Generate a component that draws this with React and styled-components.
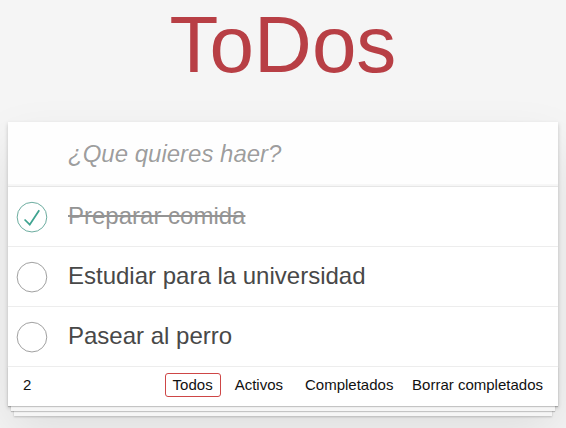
import React from "react";
import styled, { createGlobalStyle } from "styled-components";

const Global = createGlobalStyle`
  html, body { margin: 0; padding: 0; }
  body {
    background: #f5f5f5;
    font-family: "Liberation Sans", Arial, Helvetica, sans-serif;
    color: #111111;
    -webkit-font-smoothing: antialiased;
  }
  * { box-sizing: border-box; }
`;

const Page = styled.div`
  max-width: 550px;
  margin: 0 auto;
  padding-top: 5px;
  padding-bottom: 40px;
`;

const Title = styled.h1`
  margin: 0;
  font-size: 80px;
  line-height: 80px;
  font-weight: 400;
  text-align: center;
  color: #b83f45;
`;

const Card = styled.section`
  margin-top: 37px;
  background: #fff;
  box-shadow: 0 2px 4px 0 rgba(0, 0, 0, 0.2), 0 25px 50px 0 rgba(0, 0, 0, 0.1);
`;

const NewTodo = styled.input`
  display: block;
  width: 100%;
  height: 65px;
  margin: 0;
  padding: 16px 16px 16px 60px;
  border: none;
  border-bottom: 1px solid #e6e6e6;
  font-family: inherit;
  font-size: 24px;
  line-height: 1.4em;
  color: #111;
  background: rgba(0, 0, 0, 0.003);
  box-shadow: inset 0 -2px 1px rgba(0, 0, 0, 0.03);
  outline: none;
  &::placeholder {
    font-style: italic;
    color: rgba(0, 0, 0, 0.4);
  }
`;

const List = styled.ul`
  margin: 0;
  padding: 0;
  list-style: none;
`;

const Item = styled.li`
  display: flex;
  align-items: center;
  height: 60px;
  border-bottom: 1px solid #ededed;
`;

const ToggleBox = styled.span`
  flex: 0 0 40px;
  display: flex;
  align-items: center;
  justify-content: center;
  margin-left: 1px;
`;

const Label = styled.label`
  flex: 1;
  padding: 0 15px 0 19px;
  font-size: 24px;
  line-height: 1.2;
  color: ${(p) => (p.$done ? "#949494" : "#484848")};
  text-decoration: ${(p) => (p.$done ? "line-through" : "none")};
`;

const Footer = styled.footer`
  display: grid;
  grid-template-columns: 1fr auto 1fr;
  align-items: center;
  height: 39px;
  padding: 0 15px 3px;
  font-size: 15px;
  color: #111;
  box-shadow: 0 1px 1px rgba(0, 0, 0, 0.2), 0 8px 0 -3px #f6f6f6,
    0 9px 1px -3px rgba(0, 0, 0, 0.2), 0 16px 0 -6px #f6f6f6,
    0 17px 2px -6px rgba(0, 0, 0, 0.2);
`;

const Count = styled.span`
  justify-self: start;
  line-height: 20px;
`;

const Filters = styled.ul`
  display: flex;
  margin: 0;
  padding: 0;
  list-style: none;
`;

const FilterLink = styled.a`
  display: block;
  margin: 3px;
  padding: 3px 7px;
  line-height: 16px;
  color: inherit;
  text-decoration: none;
  border: 1px solid ${(p) => (p.$selected ? "#ce4646" : "transparent")};
  border-radius: 3px;
`;

const Clear = styled.span`
  justify-self: end;
  line-height: 20px;
`;

function Toggle({ done }) {
  return (
    <svg width="40" height="40" viewBox="-10 -18 100 135">
      <circle
        cx="50"
        cy="50"
        r="50"
        fill="none"
        stroke={done ? "#59A193" : "#949494"}
        strokeWidth="3"
      />
      {done && <path fill="#3EA390" d="M72 25L42 71 27 56l-4 4 20 20 34-52z" />}
    </svg>
  );
}

const todos = [
  { text: "Preparar comida", done: true },
  { text: "Estudiar para la universidad", done: false },
  { text: "Pasear al perro", done: false },
];

export default function App() {
  return (
    <>
      <Global />
      <Page>
        <Title>ToDos</Title>
        <Card>
          <NewTodo placeholder="¿Que quieres haer?" />
          <List>
            {todos.map((t) => (
              <Item key={t.text}>
                <ToggleBox>
                  <Toggle done={t.done} />
                </ToggleBox>
                <Label $done={t.done}>{t.text}</Label>
              </Item>
            ))}
          </List>
          <Footer>
            <Count>2</Count>
            <Filters>
              <li><FilterLink $selected>Todos</FilterLink></li>
              <li><FilterLink>Activos</FilterLink></li>
              <li><FilterLink>Completados</FilterLink></li>
            </Filters>
            <Clear>Borrar completados</Clear>
          </Footer>
        </Card>
      </Page>
    </>
  );
}
